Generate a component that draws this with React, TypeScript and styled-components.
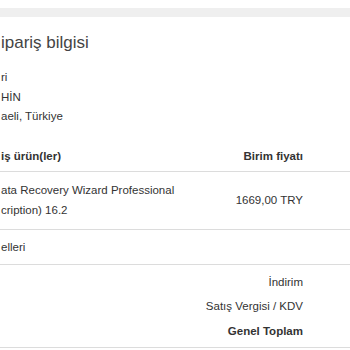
import styled, { createGlobalStyle } from "styled-components";

const GlobalStyle = createGlobalStyle`
  html, body {
    margin: 0;
    padding: 0;
    background: #ffffff;
  }
  body {
    font-family: "Liberation Sans", Arial, sans-serif;
    color: #333333;
    overflow: hidden;
  }
`;

const totals = [
  { label: "İndirim", bold: false },
  { label: "Satış Vergisi / KDV", bold: false },
  { label: "Genel Toplam", bold: true },
];

function App() {
  return (
    <Page>
      <GlobalStyle />
      <TopBand />
      <Card>
        <Title>ipariş bilgisi</Title>
        <Address>
          <span>ri</span>
          <span>HİN</span>
          <span>aeli, Türkiye</span>
        </Address>
        <Table>
          <HeaderRow>
            <Cell>iş ürün(ler)</Cell>
            <PriceCell>Birim fiyatı</PriceCell>
          </HeaderRow>
          <ProductRow>
            <ProductName>ata Recovery Wizard Professional cription) 16.2</ProductName>
            <PriceCell>1669,00 TRY</PriceCell>
          </ProductRow>
          <PlainRow>
            <Cell>elleri</Cell>
          </PlainRow>
          <TotalsRow>
            {totals.map((t) => (
              <TotalLabel key={t.label} $bold={t.bold}>
                {t.label}
              </TotalLabel>
            ))}
          </TotalsRow>
        </Table>
      </Card>
    </Page>
  );
}

const Page = styled.div`
  width: 350px;
  height: 350px;
  padding-top: 8px;
  box-sizing: border-box;
  overflow: hidden;
`;

const TopBand = styled.div`
  height: 9px;
  background: #efefef;
`;

const Card = styled.div`
  display: flex;
  flex-direction: column;
  background: #ffffff;
`;

const Title = styled.h1`
  margin: 14px 0 0 1px;
  font-size: 17px;
  line-height: 24px;
  font-weight: normal;
  color: #444444;
`;

const Address = styled.div`
  display: flex;
  flex-direction: column;
  margin: 13px 0 0 1px;
  font-size: 11.5px;
  line-height: 19.5px;
`;

const Table = styled.div`
  display: flex;
  flex-direction: column;
  margin-top: 19px;
  font-size: 11.5px;
  line-height: 20px;
`;

const Row = styled.div`
  display: flex;
  justify-content: space-between;
  align-items: center;
  padding: 0 47px 0 1px;
  border-bottom: 1px solid #dcdcdc;
`;

const HeaderRow = styled(Row)`
  font-weight: bold;
  padding-bottom: 5px;
`;

const ProductRow = styled(Row)`
  padding-top: 8px;
  padding-bottom: 9px;
`;

const PlainRow = styled(Row)`
  padding-top: 7px;
  padding-bottom: 7px;
`;

const TotalsRow = styled(Row)`
  flex-direction: column;
  align-items: flex-end;
  padding-top: 5px;
  padding-bottom: 4px;
  line-height: 24.5px;
`;

const Cell = styled.span``;

const ProductName = styled.span`
  max-width: 200px;
`;

const PriceCell = styled.span`
  text-align: right;
`;

const TotalLabel = styled.span<{ $bold: boolean }>`
  font-weight: ${(p) => (p.$bold ? "bold" : "normal")};
`;

export default App;
